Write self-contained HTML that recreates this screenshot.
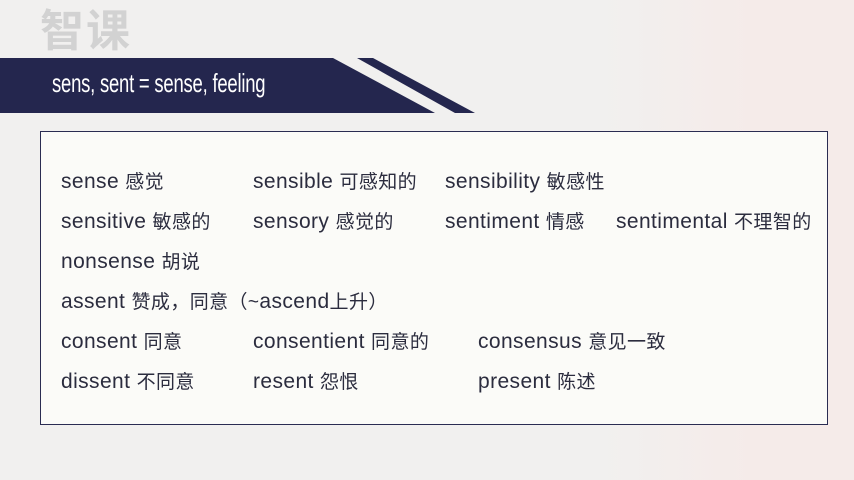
<!DOCTYPE html>
<html><head><meta charset="utf-8"><style>
body{margin:0;width:854px;height:480px;overflow:hidden;background:#f1f0ef;position:relative;font-family:"Liberation Sans","Noto Sans CJK SC",sans-serif}
.bg1{position:absolute;left:600px;top:0;width:254px;height:480px;background:linear-gradient(90deg,rgba(246,236,234,0),#f5ebe9 60%);}
.logo{position:absolute;left:40px;top:2px;font-size:44px;font-weight:bold;color:#d2d2d2;font-family:"Noto Sans CJK SC",sans-serif;letter-spacing:2px;line-height:50px}
.t{position:absolute;left:52px;top:68px;color:#fff;font-size:26px;font-family:"Liberation Sans Narrow","Liberation Sans",sans-serif;transform:scaleX(.71);transform-origin:left;letter-spacing:-0.3px}
.box{position:absolute;left:40px;top:131px;width:786px;height:292px;border:1.5px solid #2a2c52;background:#fbfbf8}
.w{position:absolute;font-size:21px;color:#2b2c3e;white-space:nowrap;letter-spacing:.4px}
.w span{font-size:19px}
</style></head><body>
<div class="bg1"></div>
<div class="logo">智课</div>
<svg style="position:absolute;left:0;top:0" width="854" height="130">
<polygon points="0,58 333,58 435,113 0,113" fill="#24264e"/>
<polygon points="357,58 373,58 475,113 455,113" fill="#24264e"/>
</svg>
<div class="t">sens, sent = sense, feeling</div>
<div class="box"></div>
<div class="w" style="left:61px;top:167px">sense <span>感觉</span></div>
<div class="w" style="left:253px;top:167px">sensible <span>可感知的</span></div>
<div class="w" style="left:445px;top:167px">sensibility <span>敏感性</span></div>
<div class="w" style="left:61px;top:207px">sensitive <span>敏感的</span></div>
<div class="w" style="left:253px;top:207px">sensory <span>感觉的</span></div>
<div class="w" style="left:445px;top:207px">sentiment <span>情感</span></div>
<div class="w" style="left:616px;top:207px">sentimental <span>不理智的</span></div>
<div class="w" style="left:61px;top:247px">nonsense <span>胡说</span></div>
<div class="w" style="left:61px;top:287px">assent <span>赞成，同意（~</span>ascend<span>上升）</span></div>
<div class="w" style="left:61px;top:327px">consent <span>同意</span></div>
<div class="w" style="left:253px;top:327px">consentient <span>同意的</span></div>
<div class="w" style="left:478px;top:327px">consensus <span>意见一致</span></div>
<div class="w" style="left:61px;top:367px">dissent <span>不同意</span></div>
<div class="w" style="left:253px;top:367px">resent <span>怨恨</span></div>
<div class="w" style="left:478px;top:367px">present <span>陈述</span></div>
</body></html>
